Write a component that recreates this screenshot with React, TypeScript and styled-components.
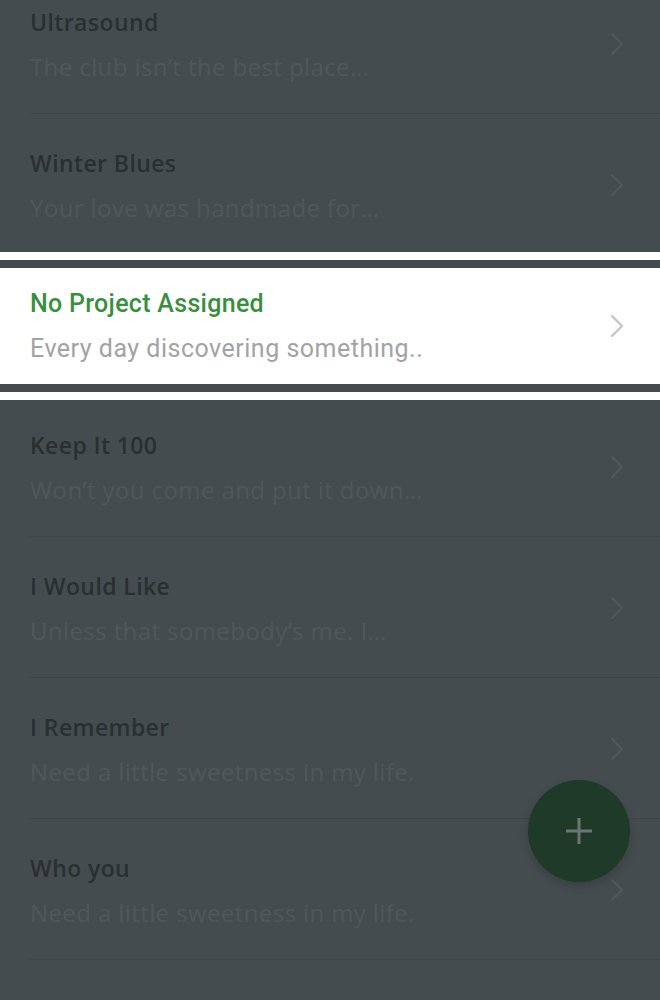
import React from "react";
import styled, { createGlobalStyle } from "styled-components";

const Global = createGlobalStyle`
  html, body {
    margin: 0;
    padding: 0;
    background: #454c4f;
    overflow: hidden;
  }
  body {
    font-family: "Open Sans", "Noto Sans", "Liberation Sans", sans-serif;
    -webkit-font-smoothing: antialiased;
  }
`;

const Screen = styled.div`
  position: relative;
  width: 660px;
  height: 1000px;
  overflow: hidden;
  background: #454c4f;
`;

const List = styled.ul`
  list-style: none;
  margin: -27px 0 0;
  padding: 0;
  display: flex;
  flex-direction: column;
`;

const Row = styled.li`
  height: 141px;
  box-sizing: border-box;
  padding-left: 30px;
  display: flex;
`;

const RowInner = styled.div`
  flex: 1;
  display: flex;
  align-items: flex-start;
  padding-top: 35px;
  padding-right: 36px;
  border-bottom: 1px solid #3f4548;
`;

const Spot = styled.li`
  height: 141px;
  box-sizing: border-box;
  padding: 13px 0 12px;
  display: flex;
  position: relative;
  z-index: 1;
`;

const SpotCard = styled.div`
  flex: 1;
  background: #ffffff;
  box-shadow: 0 0 0 8px #454c4f, 0 0 0 16px #ffffff;
  padding: 22px 36px 0 30px;
  display: flex;
  align-items: flex-start;
`;

const Texts = styled.div<{ $lit?: boolean }>`
  flex: 1;
  display: flex;
  flex-direction: column;
  gap: 17px;
  font-family: ${(p) =>
    p.$lit
      ? 'Roboto, "Noto Sans", "Liberation Sans", sans-serif'
      : '"Open Sans", "Noto Sans", "Liberation Sans", sans-serif'};
`;

const Title = styled.div<{ $lit?: boolean }>`
  font-size: ${(p) => (p.$lit ? 25 : 23)}px;
  line-height: 28px;
  font-weight: ${(p) => (p.$lit ? 500 : 600)};
  letter-spacing: ${(p) => (p.$lit ? 0.3 : 0.4)}px;
  color: ${(p) => (p.$lit ? "#3a8f3f" : "#2a2f31")};
  white-space: nowrap;
`;

const Subtitle = styled.div<{ $lit?: boolean }>`
  font-size: ${(p) => (p.$lit ? 25 : 24)}px;
  line-height: 28px;
  font-weight: 400;
  letter-spacing: ${(p) => (p.$lit ? 0.5 : 0.4)}px;
  color: ${(p) => (p.$lit ? "#a3a3a3" : "#50575a")};
  white-space: nowrap;
`;

const Chevron = styled.svg<{ $lit?: boolean }>`
  width: 14px;
  height: 24px;
  flex: none;
  margin-top: 23.5px;
  color: ${(p) => (p.$lit ? "#c6c6c6" : "#50575a")};
`;

const Fab = styled.button`
  position: absolute;
  right: 30px;
  bottom: 118px;
  width: 102px;
  height: 102px;
  border-radius: 50%;
  border: none;
  padding: 0;
  background: #1f3a29;
  box-shadow: 0 4px 10px rgba(0, 0, 0, 0.18);
  display: flex;
  align-items: center;
  justify-content: center;
  z-index: 0;
`;

const Arrow = ({ lit }: { lit?: boolean }) => (
  <Chevron $lit={lit} viewBox="0 0 14 24" fill="none">
    <path
      d="M2 2 L12 12 L2 22"
      stroke="currentColor"
      strokeWidth="2.4"
      strokeLinecap="round"
      strokeLinejoin="round"
    />
  </Chevron>
);

const items = [
  { title: "Ultrasound", sub: "The club isn’t the best place…" },
  { title: "Winter Blues", sub: "Your love was handmade for…" },
  { title: "No Project Assigned", sub: "Every day discovering something..", lit: true },
  { title: "Keep It 100", sub: "Won’t you come and put it down…" },
  { title: "I Would Like", sub: "Unless that somebody’s me. I…" },
  { title: "I Remember", sub: "Need a little sweetness in my life." },
  { title: "Who you", sub: "Need a little sweetness in my life." },
];

export default function App() {
  return (
    <Screen>
      <Global />
      <List>
        {items.map((it) =>
          it.lit ? (
            <Spot key={it.title}>
              <SpotCard>
                <Texts $lit>
                  <Title $lit>{it.title}</Title>
                  <Subtitle $lit>{it.sub}</Subtitle>
                </Texts>
                <Arrow lit />
              </SpotCard>
            </Spot>
          ) : (
            <Row key={it.title}>
              <RowInner>
                <Texts>
                  <Title>{it.title}</Title>
                  <Subtitle>{it.sub}</Subtitle>
                </Texts>
                <Arrow />
              </RowInner>
            </Row>
          )
        )}
      </List>
      <Fab aria-label="Add">
        <svg width="28" height="28" viewBox="0 0 28 28">
          <path d="M14 1 V27 M1 14 H27" stroke="#6f7472" strokeWidth="3" />
        </svg>
      </Fab>
    </Screen>
  );
}
